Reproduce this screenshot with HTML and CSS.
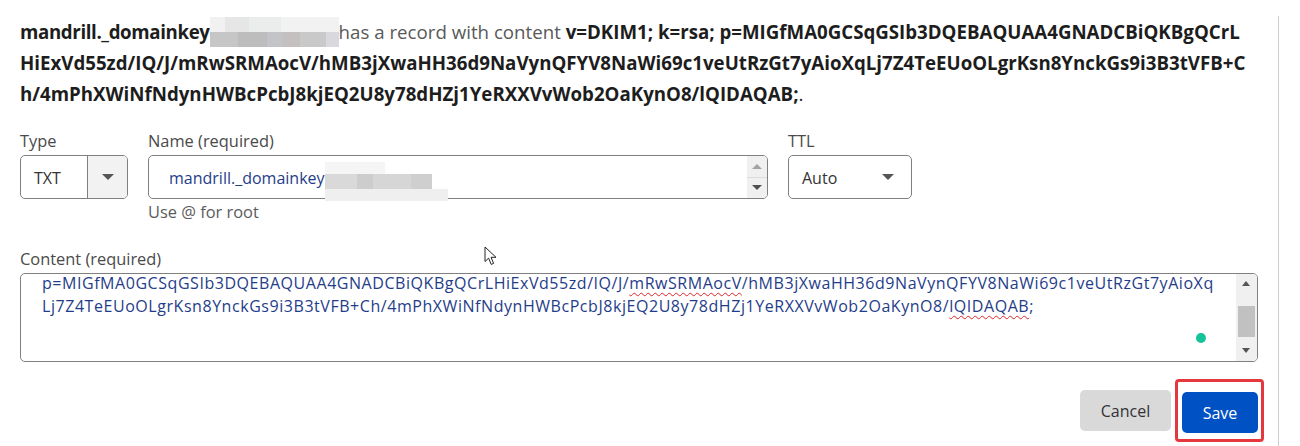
FILE: index.html
```html
<!DOCTYPE html>
<html lang="en">
<head>
    <meta charset="UTF-8">
    <meta name="viewport" content="width=device-width, initial-scale=1.0">
    <title>Edit DNS record</title>
    <link rel="stylesheet" href="styles.css">
</head>
<body>
    <div class="panel">
        <p class="summary">
            <b class="record-name">mandrill._domainkey</b><span class="blur blur-head"></span><span class="muted">has a record with content </span><b>v=DKIM1; k=rsa; p=MIGfMA0GCSqGSIb3DQEBAQUAA4GNADCBiQKBgQCrL<br>HiExVd55zd/IQ/J/mRwSRMAocV/hMB3jXwaHH36d9NaVynQFYV8NaWi69c1veUtRzGt7yAioXqLj7Z4TeEUoOLgrKsn8YnckGs9i3B3tVFB+C<br>h/4mPhXWiNfNdynHWBcPcbJ8kjEQ2U8y78dHZj1YeRXXVvWob2OaKynO8/lQIDAQAB;</b>.
        </p>

        <div class="row">
            <div class="field field-type">
                <label>Type</label>
                <div class="select split">
                    <span class="value">TXT</span>
                    <span class="caret-box"><span class="caret"></span></span>
                </div>
            </div>
            <div class="field field-name">
                <label>Name (required)</label>
                <div class="input">
                    <span class="value">mandrill._domainkey</span><span class="blur blur-name"><i></i><i></i><i></i></span>
                    <span class="spinner">
                        <span class="spin up"></span>
                        <span class="spin down"></span>
                    </span>
                </div>
                <div class="hint">Use @ for root</div>
            </div>
            <div class="field field-ttl">
                <label>TTL</label>
                <div class="select">
                    <span class="value">Auto</span>
                    <span class="caret"></span>
                </div>
            </div>
        </div>

        <div class="field field-content">
            <label>Content (required)</label>
            <div class="textarea">
                <div class="lines">
                    <div>p=MIGfMA0GCSqGSIb3DQEBAQUAA4GNADCBiQKBgQCrLHiExVd55zd/IQ/J/<span class="typo">mRwSRMAocV</span>/hMB3jXwaHH36d9NaVynQFYV8NaWi69c1veUtRzGt7yAioXq</div>
                    <div>Lj7Z4TeEUoOLgrKsn8YnckGs9i3B3tVFB+Ch/4mPhXWiNfNdynHWBcPcbJ8kjEQ2U8y78dHZj1YeRXXVvWob2OaKynO8/<span class="typo">lQIDAQAB</span>;</div>
                </div>
                <span class="grammar-dot"></span>
                <div class="scrollbar">
                    <span class="sb-arrow sb-up"></span>
                    <span class="sb-thumb"></span>
                    <span class="sb-arrow sb-down"></span>
                </div>
            </div>
            <svg class="pointer" width="14" height="20" viewBox="0 0 14 20">
                <path d="M1 1 L1 15.5 L4.6 12.2 L7.2 18.4 L9.6 17.4 L7 11.3 L12 11.3 Z" fill="#fff" stroke="#222" stroke-width="1" stroke-linejoin="round"/>
            </svg>
        </div>

        <div class="actions">
            <button class="btn btn-cancel">Cancel</button>
            <span class="highlight"><button class="btn btn-save">Save</button></span>
        </div>
    </div>
</body>
</html>
```

FILE: styles.css
```css
body { margin: 0; background: #fff; font-family: "Open Sans", "Noto Sans", sans-serif; color: #333; }
.panel { width: 1238px; padding: 0 20px; min-height: 446px; border-right: 1px solid #cfcfcf; box-sizing: content-box; }

.summary { margin: 16px 0 0; font-size: 18.7px; line-height: 31px; color: #1d1d1d; white-space: nowrap; }
.summary b { font-weight: 700; }
.summary .record-name { letter-spacing: -0.37px; }
.summary .muted { color: #595959; }

.blur { display: inline-block; vertical-align: middle; }
.blur-head { width: 129px; height: 30px; margin-top: -4px;
    background:
        linear-gradient(to right, #f1f1f1 0 12%, #e6e6e6 12% 30%, #ebeded 30% 55%, #f2f2f2 55% 100%) top / 100% 50% no-repeat,
        linear-gradient(to right, #c6c6c6 0 22%, #bdbdbd 22% 44%, #c2c4c7 44% 56%, #c5c0c0 56% 70%, #c9c9c9 70% 90%, #d8d8de 90% 100%) bottom / 100% 50% no-repeat;
}

.row { display: flex; gap: 20px; margin-top: 22px; }
.field label { display: block; font-size: 16.4px; line-height: 20px; color: #4a4a4a; margin-bottom: 4px; }
.field-type { width: 108px; }
.field-name { width: 620px; }
.field-ttl { width: 124px; }

.select, .input { height: 44px; box-sizing: border-box; border: 1px solid #808080; border-radius: 5px; display: flex; align-items: center; font-size: 16px; color: #333; background: #fff; }
.select { padding: 0 0 0 13px; justify-content: space-between; }
.select .value { padding-top: 2px; }
.select .caret { width: 0; height: 0; border-left: 6px solid transparent; border-right: 6px solid transparent; border-top: 6px solid #555; margin-right: 17px; }
.split { padding-left: 13px; overflow: hidden; }
.split .caret-box { width: 39px; align-self: stretch; border-left: 1px solid #808080; background: #f2f2f2; display: flex; align-items: center; justify-content: center; }
.split .caret-box .caret { margin: 0; }

.input { padding-left: 20px; position: relative; }
.input .value { color: #1f3d8a; padding-top: 2px; }
.blur-name { width: 123px; height: 40px; margin-top: 10px; position: relative; }
.blur-name i { position: absolute; left: 0; display: block; }
.blur-name i:nth-child(1) { top: 0; width: 60px; height: 12px; background: #f5f5f5; }
.blur-name i:nth-child(2) { top: 12px; width: 107px; height: 15px; background: linear-gradient(to right, #d9d9d9 0 30%, #cdcdcd 30% 45%, #d6d6d6 45% 80%, #cfcfcf 80%); }
.blur-name i:nth-child(3) { top: 27px; width: 123px; height: 12px; background: #efefef; }
.spinner { position: absolute; right: 0; top: 0; bottom: 0; width: 20px; background: #f0f0f0; border-radius: 0 4px 4px 0; display: flex; flex-direction: column; }
.spin { flex: 1; display: flex; align-items: center; justify-content: center; }
.spin.up { border-bottom: 1px solid #dcdcdc; }
.spin.up::after { content: ""; border-left: 5px solid transparent; border-right: 5px solid transparent; border-bottom: 5px solid #a3a3a3; }
.spin.down::after { content: ""; border-left: 5px solid transparent; border-right: 5px solid transparent; border-top: 5px solid #505050; }

.hint { font-size: 16.4px; line-height: 20px; color: #5b5b5b; margin-top: 3px; }

.field-content { margin-top: 27px; position: relative; }
.textarea { position: relative; height: 89px; box-sizing: border-box; border: 1px solid #808080; border-radius: 5px; padding: 0 0 0 21px; font-size: 16px; letter-spacing: 0.55px; line-height: 23px; color: #1f3d8a; }
.lines { margin-top: -2px; }
.lines div { white-space: nowrap; }
.typo { text-decoration: underline wavy #e0242a; text-decoration-thickness: 1px; text-underline-offset: 3px; }
.grammar-dot { position: absolute; right: 51px; top: 59px; width: 10px; height: 10px; border-radius: 50%; background: #15c39a; }
.scrollbar { position: absolute; right: 0; top: 0; bottom: 0; width: 21px; background: #f0f0f0; border-radius: 0 4px 4px 0; }
.sb-thumb { position: absolute; left: 2px; right: 2px; top: 32px; height: 31px; background: #c1c1c1; }
.sb-arrow { position: absolute; left: 6px; width: 0; height: 0; border-left: 4px solid transparent; border-right: 4px solid transparent; }
.sb-up { top: 7px; border-bottom: 5px solid #555; }
.sb-down { bottom: 8px; border-top: 5px solid #555; }
.pointer { position: absolute; left: 464px; top: -3px; }

.actions { display: flex; justify-content: flex-end; align-items: center; gap: 4px; margin-top: 17px; margin-right: -6px; }
.btn { font-family: inherit; font-size: 16px; height: 41px; border: none; border-radius: 5px; padding: 0 19px; cursor: pointer; }
.btn-cancel { background: #d9d9d9; color: #333; width: 91px; }
.btn-save { background: #0051c3; color: #fff; width: 76px; }
.highlight { display: inline-flex; padding: 10px 3px 6px 4px; border: 3px solid #e5383e; border-radius: 4px; }
```
